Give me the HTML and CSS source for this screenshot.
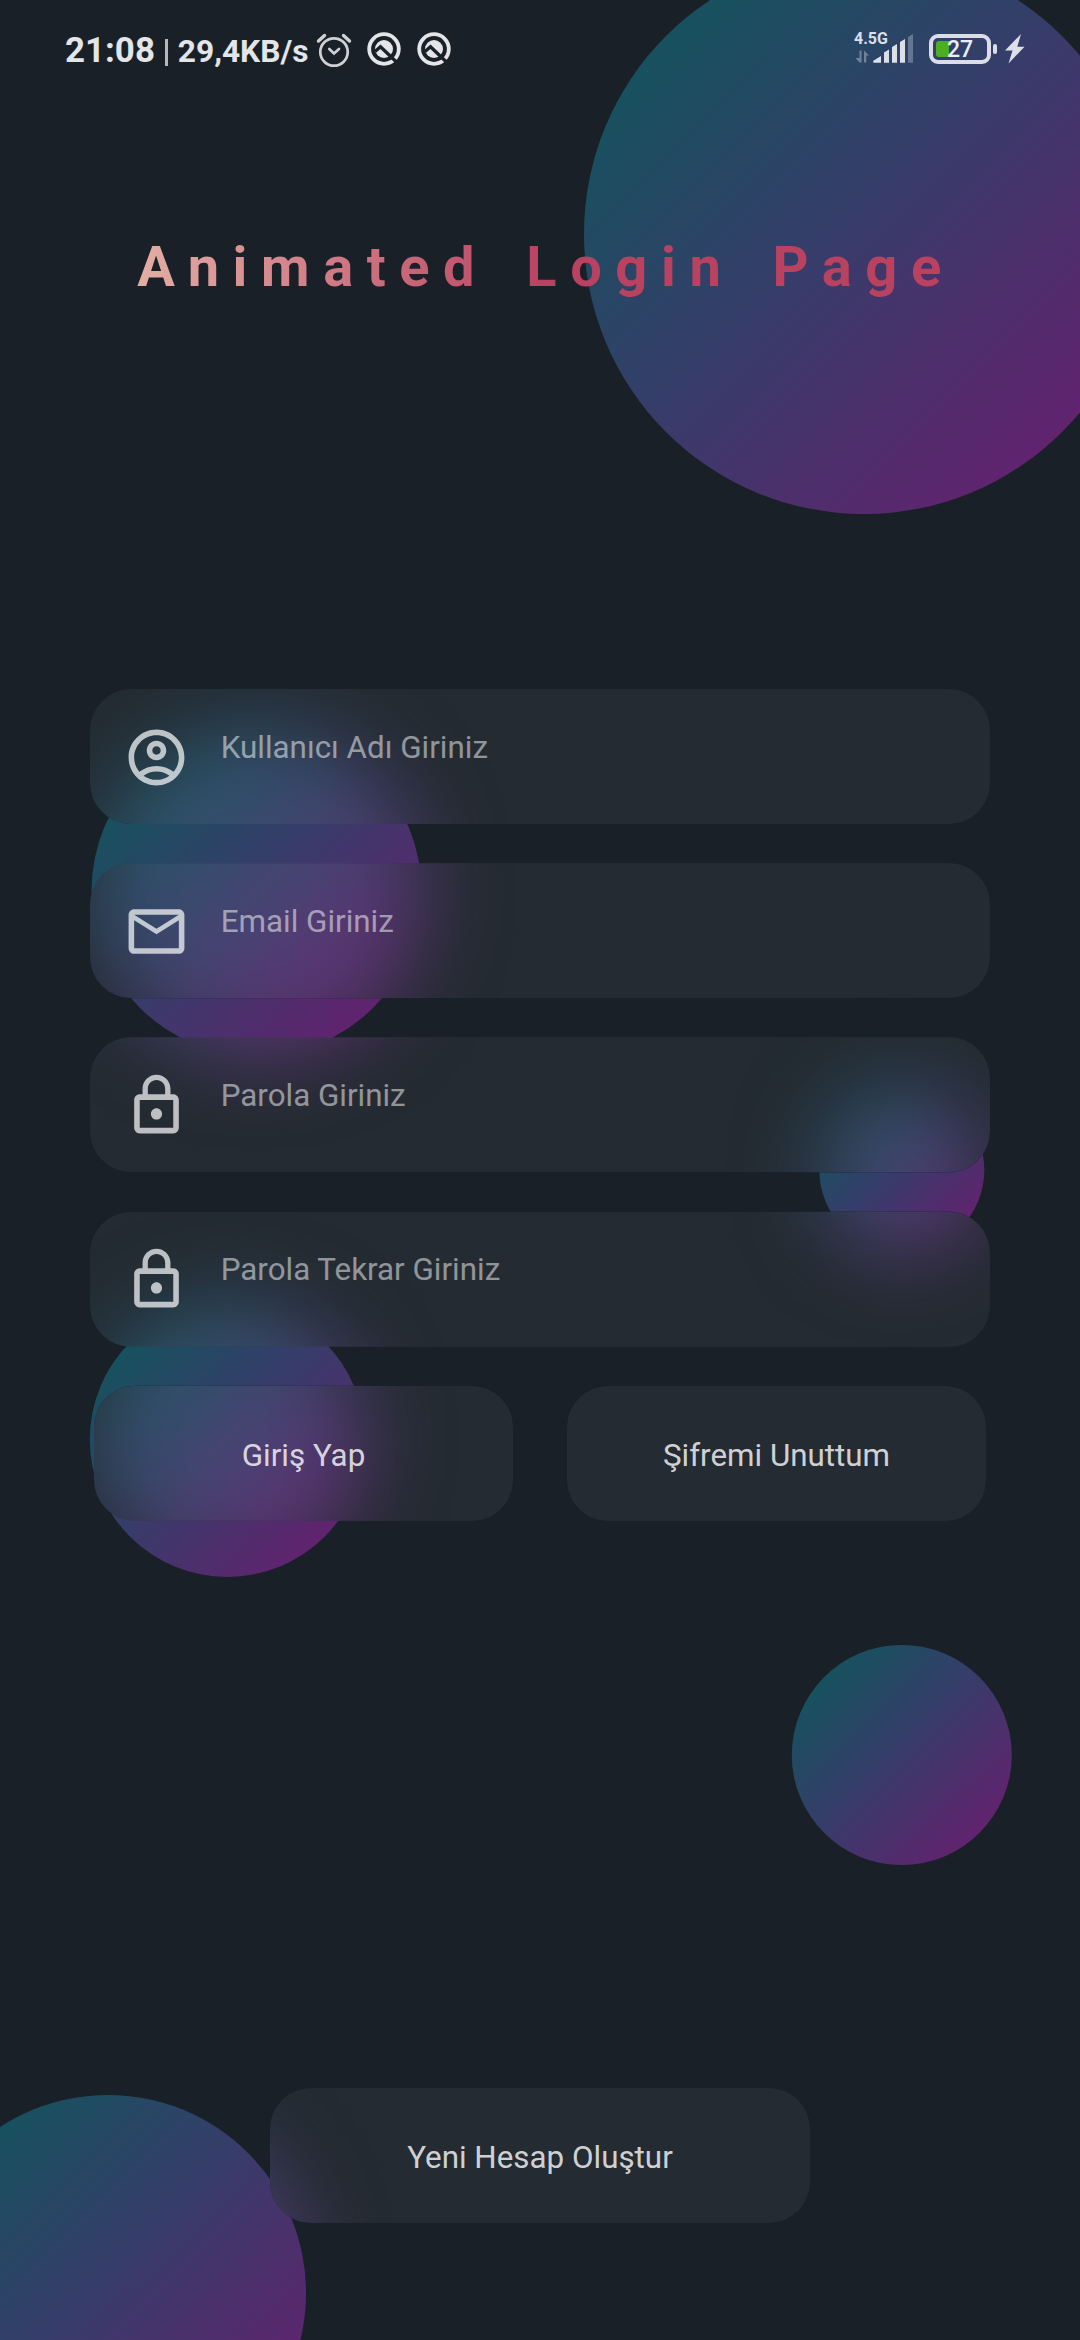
FILE: index.html
```html
<!DOCTYPE html>
<html lang="tr">
<head>
<meta charset="utf-8">
<title>Animated Login Page</title>
<link rel="stylesheet" href="styles.css">
</head>
<body>
<svg class="sprite" aria-hidden="true">
  <symbol id="i-account" viewBox="0 0 24 24"><path d="M12 2C6.48 2 2 6.48 2 12s4.48 10 10 10 10-4.48 10-10S17.52 2 12 2zM7.35 18.5C8.66 17.56 10.26 17 12 17s3.34.56 4.65 1.5c-1.31.94-2.91 1.5-4.65 1.5s-3.34-.56-4.65-1.5zm10.79-1.38C16.45 15.8 14.32 15 12 15s-4.45.8-6.14 2.12C4.7 15.73 4 13.95 4 12c0-4.42 3.58-8 8-8s8 3.58 8 8c0 1.95-.7 3.73-1.86 5.12zM12 6c-1.93 0-3.5 1.57-3.5 3.5S10.07 13 12 13s3.5-1.57 3.5-3.5S13.93 6 12 6zm0 5c-.83 0-1.5-.67-1.5-1.5S11.17 8 12 8s1.5.67 1.5 1.5S12.83 11 12 11z"/></symbol>
  <symbol id="i-mail" viewBox="0 0 24 24"><path fill-rule="evenodd" d="M4 4h16c1.1 0 2 .9 2 2v12c0 1.1-.9 2-2 2H4c-1.1 0-2-.9-2-2V6c0-1.1.9-2 2-2zM4 18h16V8l-8 5-8-5zM4 6l8 5 8-5z"/></symbol>
  <symbol id="i-lock" viewBox="0 0 24 24"><path d="M12 17c1.1 0 2-.9 2-2s-.9-2-2-2-2 .9-2 2 .9 2 2 2zm6-9h-1V6c0-2.76-2.24-5-5-5S7 3.24 7 6v2H6c-1.1 0-2 .9-2 2v10c0 1.1.9 2 2 2h12c1.1 0 2-.9 2-2V10c0-1.1-.9-2-2-2zM8.900 6c0-1.710 1.390-3.100 3.100-3.100s3.100 1.390 3.100 3.100v2H8.900V6zM18 20H6V10h12v10z"/></symbol>
  <symbol id="i-app" viewBox="0 0 34 34">
    <circle cx="17" cy="17" r="14.8" fill="none" stroke="currentColor" stroke-width="3.8"/>
    <circle cx="17" cy="17" r="9"/>
    <path class="cut" d="M8 19.500L13.500 14.800L31 31.500"/>
  </symbol>
</svg>

<main class="screen">
  <svg class="scene" viewBox="0 0 1080 2340" aria-hidden="true">
    <defs>
      <linearGradient id="orb-fill" x1="0" y1="0" x2="1" y2="1">
        <stop offset=".12" stop-color="#14535d"/>
        <stop offset=".44" stop-color="#333f69"/>
        <stop offset=".9" stop-color="#662070"/>
      </linearGradient>
      <filter id="frost" filterUnits="userSpaceOnUse" x="-200" y="-200" width="1480" height="2740" color-interpolation-filters="sRGB">
        <feGaussianBlur stdDeviation="41"/>
      </filter>
      <clipPath id="panes">
        <rect x="90" y="689" width="900" height="135" rx="41"/>
        <rect x="90" y="863.2" width="900" height="135" rx="41"/>
        <rect x="90" y="1037.4" width="900" height="135" rx="41"/>
        <rect x="90" y="1211.6" width="900" height="135" rx="41"/>
        <rect x="94" y="1385.8" width="419" height="135" rx="41"/>
        <rect x="567" y="1385.8" width="419" height="135" rx="41"/>
        <rect x="270" y="2088" width="540" height="135" rx="41"/>
      </clipPath>
      <g id="orbs" fill="url(#orb-fill)">
        <circle cx="864" cy="234" r="280"/>
        <circle cx="256.5" cy="891" r="165"/>
        <circle cx="901.8" cy="1170" r="82.5"/>
        <circle cx="227.3" cy="1439.5" r="137.5"/>
        <circle cx="901.8" cy="1755" r="110"/>
        <circle cx="108" cy="2293" r="198"/>
      </g>
    </defs>
    <use href="#orbs"/>
    <g clip-path="url(#panes)">
      <rect class="backdrop" width="1080" height="2340"/>
      <use href="#orbs" filter="url(#frost)"/>
    </g>
  </svg>

  <header class="status">
    <div class="status-left">
      <span class="clock">21:08</span>
      <span class="divider"></span>
      <span class="speed">29,4KB/s</span>
      <svg class="alarm" viewBox="0 0 36 36" stroke-width="2.7" stroke-linecap="round"><circle cx="18" cy="19" r="13.7"/><path d="M13.300 16l4.700 4.400 5-4.400"/><path d="M2.500 8L8.500 2.500M33.500 8L27.500 2.500" stroke-width="3.4"/></svg>
      <svg class="app"><use href="#i-app"/></svg>
      <svg class="app"><use href="#i-app"/></svg>
    </div>
    <div class="status-right">
      <svg class="network" viewBox="0 0 60 32">
        <text class="net-type" x="0" y="11">4.5G</text>
        <path d="M5.500 17.500h2V29.500h-2L1.500 25h4zM10 29.500v-12l5 5h-2.700v7z" opacity=".4"/>
        <path d="M19.300 29.700v-2L27 23v6.700zM30 29.700V19.500l5-3v13.200zM38 29.700V14l5-3v18.700zM46 29.700V9l5-3v23.700z"/>
        <path d="M54 29.700V4l5-3v28.700z" opacity=".32"/>
      </svg>
      <div class="battery"><span class="level"></span><span class="pct">27</span></div>
      <span class="nub"></span>
      <svg class="bolt" viewBox="0 0 20 30"><path d="M16 0L0 16.500h7.500L3.500 29.500L19.500 12.800H12.300z"/></svg>
    </div>
  </header>

  <h1 class="title">Animated Login Page</h1>

  <form class="form">
    <label class="glass field"><svg class="icon"><use href="#i-account"/></svg><span class="hint">Kullanıcı Adı Giriniz</span></label>
    <label class="glass field"><svg class="icon"><use href="#i-mail"/></svg><span class="hint">Email Giriniz</span></label>
    <label class="glass field"><svg class="icon"><use href="#i-lock"/></svg><span class="hint">Parola Giriniz</span></label>
    <label class="glass field"><svg class="icon"><use href="#i-lock"/></svg><span class="hint">Parola Tekrar Giriniz</span></label>
    <div class="actions">
      <button type="button" class="glass button">Giriş Yap</button>
      <button type="button" class="glass button">Şifremi Unuttum</button>
    </div>
  </form>

  <button type="button" class="glass button signup">Yeni Hesap Oluştur</button>
</main>
</body>
</html>
```

FILE: styles.css
```css
* { box-sizing: border-box; }

body {
  margin: 0;
  background: #192028;
  font-family: Roboto, sans-serif;
}

.sprite { position: absolute; width: 0; height: 0; }

.screen {
  position: relative;
  display: flex;
  flex-direction: column;
  align-items: center;
  width: 1080px;
  height: 2340px;
  overflow: hidden;
  background: #192028;
}

/* Floating gradient circles, sharp in the open and frosted behind each pane */
.scene {
  position: absolute;
  inset: 0;
  width: 1080px;
  height: 2340px;
}
.backdrop { fill: #192028; }

/* Status bar */
.status {
  position: relative;
  display: flex;
  justify-content: space-between;
  align-items: center;
  width: 100%;
  height: 98px;
  padding: 0 55px 0 65px;
  color: #e3e5e8;
}
.status svg { fill: currentColor; flex: none; }
.status-left, .status-right { display: flex; align-items: center; }
.clock { margin-top: 3px; font-size: 34.9px; font-weight: 700; line-height: 40px; }
.divider { width: 2.5px; height: 27px; margin: 7px 10.2px 0; background: #b4b8bc; }
.speed { margin-top: 5px; font-size: 31.7px; font-weight: 700; line-height: 40px; }
.status .alarm { width: 36px; height: 36px; margin: 4px 0 0 7px; fill: none; stroke: #cfd1d4; }
.app { width: 34px; height: 34px; margin-left: 15px; }
.app + .app { margin-left: 16px; }
.cut { fill: none; stroke: #192028; stroke-width: 3.3; }

.status-right { color: #dcdfe8; }
.network { width: 60px; height: 32px; margin-right: 15px; overflow: visible; }
.net-type { font-size: 16px; font-weight: 700; }
.battery {
  position: relative;
  display: flex;
  align-items: center;
  justify-content: center;
  width: 62px;
  height: 30px;
  border: 4px solid #dcdde8;
  border-radius: 9px;
}
.level {
  position: absolute;
  left: 3px;
  top: 3px;
  width: 13px;
  height: 16px;
  border-radius: 3px 0 0 3px;
  background: #4caf22;
}
.pct { position: relative; padding-top: 2px; font-size: 23px; line-height: 24px; font-weight: 500; color: #eceef4; }
.nub { width: 4px; height: 10px; margin-left: 2px; border-radius: 2px; background: #dcdde8; }
.bolt { width: 20px; height: 30px; margin-left: 8px; }

/* Heading */
.title {
  position: relative;
  align-self: flex-start;
  height: 66px;
  margin: 136px 0 0 137.3px;
  font-size: 56px;
  font-weight: 700;
  line-height: 66px;
  letter-spacing: 13.6px;
  word-spacing: 10.5px;
  white-space: nowrap;
  color: transparent;
  background: linear-gradient(90deg, #e3aea5, #ba4261 405px);
  -webkit-background-clip: text;
  background-clip: text;
}

/* Translucent panes */
.glass {
  position: relative;
  border: 0;
  border-radius: 41px;
  height: 135px;
  background: rgba(255, 255, 255, .05);
}

.form {
  display: flex;
  flex-direction: column;
  gap: 39.2px;
  width: 900px;
  margin-top: 389px;
}
.field {
  display: flex;
  padding: 34.5px 32.7px;
}
.icon { width: 67px; height: 67px; fill: rgba(255, 255, 255, .7); }
.hint {
  margin: 5px 0 0 31px;
  font-size: 31.35px;
  line-height: 38px;
  color: rgba(255, 255, 255, .5);
}
.actions { display: flex; justify-content: space-between; padding: 0 4px; }
.button {
  width: 419px;
  padding: 5px 0 0;
  font: 400 31.35px/38px Roboto, sans-serif;
  text-align: center;
  color: rgba(255, 255, 255, .8);
}
.signup { width: 540px; flex: none; margin-top: 567.2px; }
```
